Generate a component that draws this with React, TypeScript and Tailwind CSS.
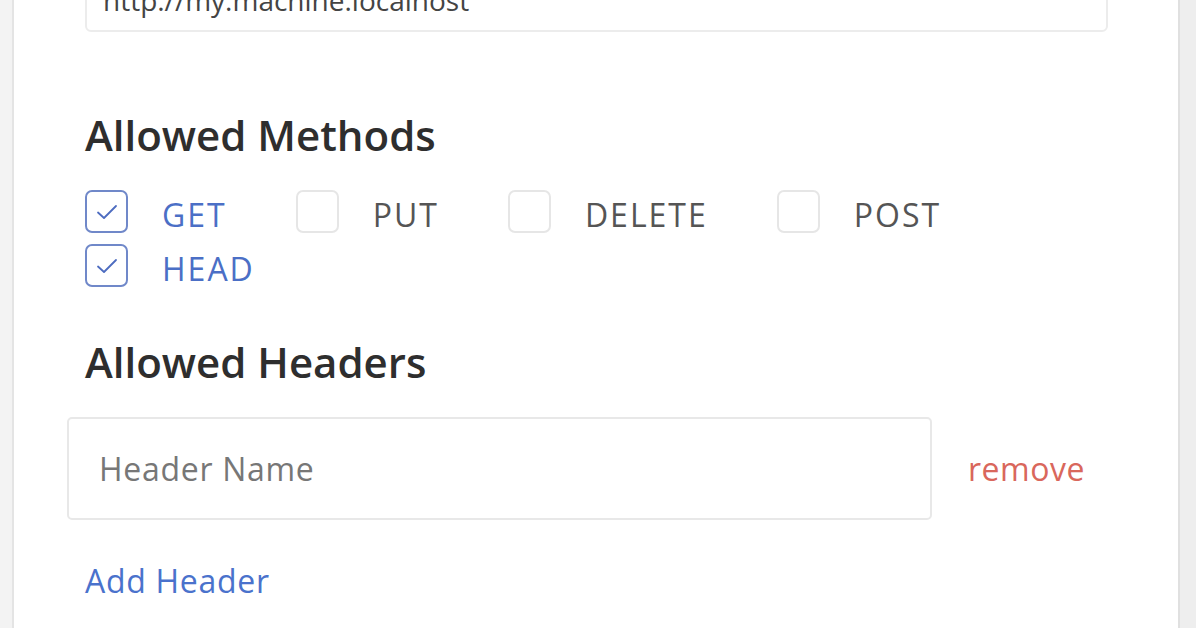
const methods = [
  { name: "GET", checked: true },
  { name: "PUT", checked: false },
  { name: "DELETE", checked: false },
  { name: "POST", checked: false },
  { name: "HEAD", checked: true },
];

const Checkbox = ({ checked }: { checked: boolean }) => (
  <div
    className={
      checked
        ? "w-[43px] h-[43px] rounded-[7px] border-2 border-[#7088c9] flex items-center justify-center shrink-0"
        : "w-[43px] h-[43px] rounded-[7px] border-2 border-[#e6e6e6] shrink-0"
    }
  >
    {checked && (
      <svg width="22" height="16" viewBox="0 0 22 16" fill="none">
        <path d="M2 8.5 L8 14 L20 2" stroke="#4d6cc0" strokeWidth="1.8" strokeLinecap="round" strokeLinejoin="round" />
      </svg>
    )}
  </div>
);

export default function App() {
  return (
    <div className="w-[1196px] h-[628px] overflow-hidden flex bg-white font-['Open_Sans',sans-serif]">
      <div className="w-[14px] shrink-0 bg-[#f3f3f3] border-r-2 border-[#e4e4e4]" />

      <div className="flex-1 pl-[71px] pr-[70px] flex flex-col">
        {/* Origin input, cut off at the top */}
        <div className="-mt-[43px] h-[75px] shrink-0 border-2 border-[#ececec] rounded-md px-[16px] pt-[10px] flex items-center text-[28px] text-[#444]">
          http://my.machine.localhost
        </div>

        <h2 className="mt-[82px] text-[42px] leading-[42px] font-semibold text-[#2e2e2e]">Allowed Methods</h2>

        <div className="mt-[34px] flex flex-wrap gap-x-[69px] gap-y-[11px]">
          {methods.map((m) => (
            <label key={m.name} className="h-[43px] flex items-center gap-[34px]">
              <Checkbox checked={m.checked} />
              <span
                className={
                  m.checked
                    ? "mt-[6px] text-[32px] tracking-[2px] text-[#4b6fc6]"
                    : "mt-[6px] text-[32px] tracking-[2px] text-[#555]"
                }
              >
                {m.name}
              </span>
            </label>
          ))}
        </div>

        <h2 className="mt-[54px] text-[42px] leading-[42px] font-semibold text-[#2e2e2e]">Allowed Headers</h2>

        <div className="mt-[34px] -ml-[18px] flex items-center gap-[36px]">
          <div className="w-[865px] h-[103px] border-2 border-[#e8e8e8] rounded-[5px] px-[30px] flex items-center text-[32px] tracking-[0.7px] text-[#777]">
            Header Name
          </div>
          <span className="text-[32px] tracking-[0.5px] text-[#d9675c]">remove</span>
        </div>

        <div className="mt-[37px] text-[32px] tracking-[0.7px] text-[#4a72cc]">Add Header</div>
      </div>

      <div className="w-[18px] shrink-0 bg-[#eeeeee] border-l-2 border-[#e0e0e0]" />
    </div>
  );
}
